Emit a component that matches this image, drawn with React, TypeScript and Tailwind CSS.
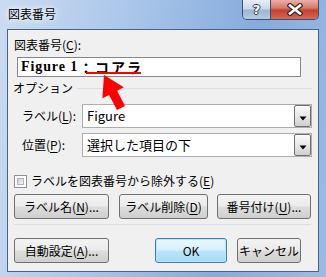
import React from 'react';

const btnFace =
  'bg-[linear-gradient(#f3f3f3,#ebebeb_48%,#dddddd_52%,#cfcfcf)] border border-[#707070] rounded-[3px] flex items-center justify-center';

function Mn({ k }: { k: string }) {
  return (
    <>
      (<span className="underline underline-offset-2">{k}</span>)
    </>
  );
}

function Combo({ value }: { value: string }) {
  return (
    <div className="w-[230px] h-[24px] border border-[#abadb3] bg-white flex items-center">
      <span className="flex-1 pl-[4px] text-[13px] leading-[16px]">{value}</span>
      <div className="w-[17px] h-[22px] border border-[#707070] rounded-[2px] bg-[linear-gradient(#fafafa,#e8e8e8_50%,#cfcfcf)] flex items-center justify-center">
        <svg width="8" height="8" viewBox="0 0 8 8" className="mt-[3px]">
          <path d="M0.5 2.5h7L4 6.5z" fill="#000" />
        </svg>
      </div>
    </div>
  );
}

export default function App() {
  return (
    <div className="relative w-[326px] h-[277px] overflow-hidden bg-[linear-gradient(100deg,#cbdcf1_0%,#aac6ea_35%,#86abdc_70%,#9dbbe4_100%)] font-['Noto_Sans_CJK_JP',sans-serif] text-[12px] text-black">
      {/* Title bar */}
      <div className="h-[29px] flex justify-between">
        <div className="pl-[8px] pt-[6px] leading-[16px] [text-shadow:0_0_4px_#fff,0_0_8px_#fff]">図表番号</div>
        <div className="mr-[7px] flex h-[20px] border border-t-0 border-[#3b4f6e] rounded-b-[5px] overflow-hidden">
          <div className="w-[28px] h-full bg-[linear-gradient(#e6eef8,#c9d8ea_45%,#9fb7d3_55%,#b6cbe2)] flex items-center justify-center border-r border-[#3b4f6e]">
            <span className="text-white font-bold text-[13px] leading-none font-['DejaVu_Sans',sans-serif] [text-shadow:1px_0_#2b3a52,-1px_0_#2b3a52,0_1px_#2b3a52,0_-1px_#2b3a52]">
              ?
            </span>
          </div>
          <div className="w-[47px] h-full bg-[linear-gradient(#eab0a4,#d77c6c_40%,#c4402f_55%,#d56a58)] flex items-center justify-center">
            <svg width="16" height="13" viewBox="0 0 16 13">
              <path d="M3 2.5L13 10.5M13 2.5L3 10.5" stroke="#3a2a2a" strokeWidth="5" strokeLinecap="square" />
              <path d="M3 2.5L13 10.5M13 2.5L3 10.5" stroke="#fff" strokeWidth="2.6" strokeLinecap="square" />
            </svg>
          </div>
        </div>
      </div>

      {/* Client area */}
      <div className="mx-[7px] h-[243px] border border-[#4c6284] bg-[#f0f0f0] flex flex-col">
        <div className="mt-[7px] pl-[6px] leading-[16px]">
          図表番号<Mn k="C" />:
        </div>
        <div className="mt-[4px] ml-[9px] w-[284px] h-[20px] border border-[#828790] bg-white flex items-center pl-[3px]">
          <span className="font-bold text-[14px] leading-[16px] tracking-[0.9px] font-['Liberation_Serif','Noto_Sans_CJK_JP',serif]">
            Figure 1
          </span>
          <span className="font-bold text-[14px] leading-[16px] ml-[1px] font-['Noto_Sans_CJK_JP',sans-serif]">：</span>
          <span className="font-bold text-[14px] leading-[16px] tracking-[2px] ml-[2px] font-['Noto_Sans_CJK_JP',sans-serif]">コアラ</span>
        </div>

        <div className="mt-[3px] pl-[5px] flex items-center leading-[16px]">
          <span>オプション</span>
          <div className="flex-1 h-px bg-[#d5dfe5] ml-[4px] mr-[6px]" />
        </div>

        <div className="mt-[8px] flex items-center">
          <div className="pl-[14px] w-[74px] leading-[16px]">
            ラベル<Mn k="L" />:
          </div>
          <Combo value="Figure" />
        </div>
        <div className="mt-[5px] flex items-center">
          <div className="pl-[14px] w-[74px] leading-[16px]">
            位置<Mn k="P" />:
          </div>
          <Combo value="選択した項目の下" />
        </div>

        <div className="mt-[16px] pl-[6px] flex items-center gap-[4px] leading-[16px]">
          <div className="w-[13px] h-[13px] border border-[#8e8f8f] bg-white p-[2px]">
            <div className="w-full h-full bg-[linear-gradient(135deg,#cbcfd5,#f6f6f6)] border border-[#b0b4ba]" />
          </div>
          <span>
            ラベルを図表番号から除外する<Mn k="E" />
          </span>
        </div>

        <div className="mt-[5px] pl-[6px] flex h-[25px]">
          <div className={`${btnFace} w-[95px]`}>
            ラベル名<Mn k="N" />...
          </div>
          <div className={`${btnFace} w-[89px] ml-[10px]`}>
            ラベル削除<Mn k="D" />
          </div>
          <div className={`${btnFace} w-[94px] ml-[9px]`}>
            番号付け<Mn k="U" />...
          </div>
        </div>

        <div className="mt-[5px] ml-[6px] w-[297px] h-px bg-[#d5dfe5]" />

        <div className="mt-[13px] pl-[6px] flex h-[25px]">
          <div className={`${btnFace} w-[95px]`}>
            自動設定<Mn k="A" />...
          </div>
          <div className="w-[72px] ml-[46px] border border-[#3c7fb1] rounded-[3px] bg-[linear-gradient(#eaf6fd,#d9f0fc_48%,#bee6fd_52%,#a7d9f5)] shadow-[inset_0_0_0_1px_#b6e6fb] flex items-center justify-center">
            OK
          </div>
          <div className={`${btnFace} w-[64px] ml-[10px]`}>キャンセル</div>
        </div>
      </div>

      {/* Red annotation */}
      <div className="absolute left-[86px] top-[72px] w-[55px] h-[2px] bg-[#ff0000]" />
      <svg className="absolute left-0 top-0 pointer-events-none" width="326" height="277" viewBox="0 0 326 277">
        <polygon
          points="104,75 123.8,87.3 117.1,90.7 125,106 117,110 109.1,94.9 102.4,98.3"
          fill="#ff0000"
        />
      </svg>
    </div>
  );
}
